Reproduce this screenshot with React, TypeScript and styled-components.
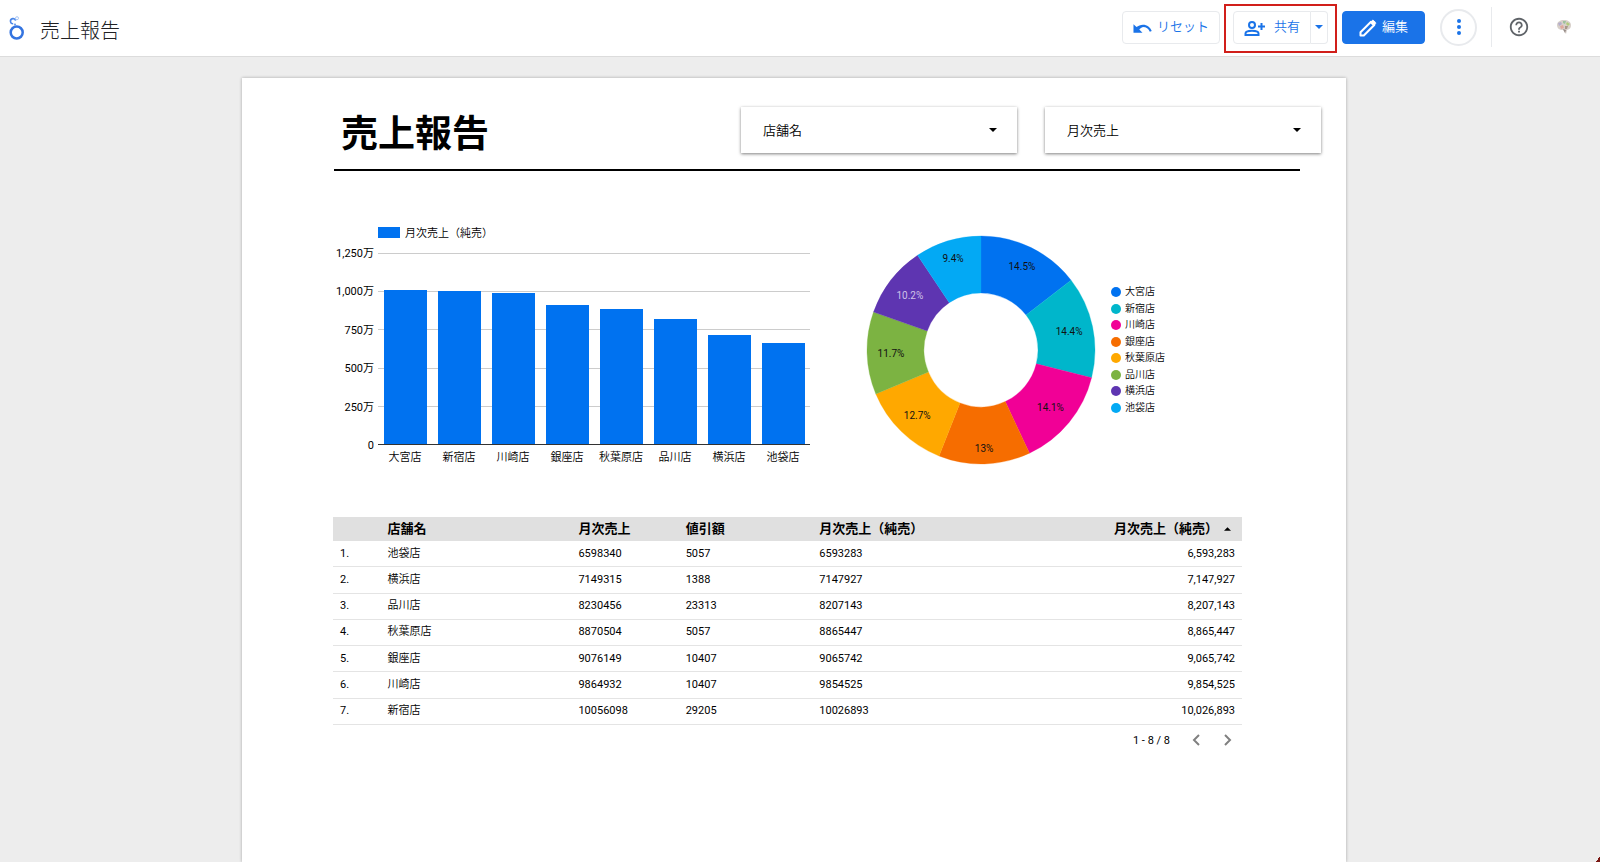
import React from 'react';
import styled, { createGlobalStyle, css } from 'styled-components';

const Global = createGlobalStyle`
  *, *::before, *::after { box-sizing: border-box; }
  html, body { margin: 0; min-height: 100%; background: #ededed; }
  body { font-family: Roboto, "Noto Sans CJK JP", sans-serif; color: #000; overflow: hidden; }
  #root { height: 100vh; }
  button, select { font: inherit; color: inherit; margin: 0; }
`;

const blue = '#1a73e8';

const Shell = styled.div`
  display: flex;
  flex-direction: column;
  height: 100%;
`;

const TopBar = styled.header`
  display: flex;
  align-items: center;
  flex: none;
  height: 57px;
  padding: 0 27px 2px 8px;
  background: #fff;
  border-bottom: 1px solid #dcdcdc;
`;

const ReportName = styled.h1`
  margin: 0 auto 0 15px;
  padding-top: 8px;
  font-size: 20px;
  line-height: 32px;
  font-weight: 300;
  color: #202124;
`;

const outlined = css`
  background: #fff;
  color: ${blue};
  border: 1px solid #e8eaed;
`;

const ToolButton = styled.button<{ $primary?: boolean }>`
  display: flex;
  align-items: center;
  justify-content: center;
  gap: 5px;
  height: 33px;
  padding: 0 10px;
  font-size: 13px;
  line-height: 18px;
  border-radius: 4px;
  ${outlined}
  ${p => p.$primary && css`
    background: ${blue};
    border-color: ${blue};
    color: #fff;
    padding: 0 16px;
  `}
`;

const ButtonText = styled.span`
  font-weight: 350;
`;

const Highlight = styled.div`
  display: flex;
  align-items: center;
  height: 49px;
  margin: 3px 5px 0 4px;
  padding: 0 7px 3px;
  border: 2px solid #d11f1a;
`;

const ShareButton = styled(ToolButton)`
  width: 78px;
  gap: 9px;
  padding: 0 8px;
  border-radius: 4px 0 0 4px;
`;

const ShareMenuButton = styled(ToolButton)`
  width: 17px;
  padding: 0;
  border-left: 0;
  border-radius: 0 4px 4px 0;
`;

const RoundButton = styled.button`
  display: flex;
  align-items: center;
  justify-content: center;
  width: 37px;
  height: 37px;
  margin: 0 14px 0 15px;
  padding: 0;
  border-radius: 50%;
  ${outlined}
  border-width: 2px;
`;

const PlainButton = styled.button`
  display: flex;
  align-items: center;
  justify-content: center;
  padding: 0;
  border: 0;
  background: none;
`;

const UserTools = styled.div`
  display: flex;
  align-items: center;
  gap: 25px;
  height: 40px;
  padding-left: 16px;
  border-left: 1px solid #e8eaed;
`;

const Workspace = styled.main`
  flex: 1;
  min-height: 0;
  padding: 21px 12px 0 0;
  overflow: hidden;
`;

const Sheet = styled.article`
  width: 100%;
  max-width: 1104px;
  min-height: 100%;
  margin: 0 auto;
  padding: 29px 25px 0 91px;
  background: #fff;
  box-shadow: 0 0 3px rgba(0, 0, 0, 0.3);
`;

const SheetHead = styled.div`
  display: flex;
  gap: 28px;
`;

const SheetTitle = styled.h2`
  flex: 1;
  margin: 0 0 0 8px;
  font-size: 37px;
  line-height: 56px;
  font-weight: 700;
`;

const FilterBox = styled.label`
  display: block;
  position: relative;
  width: 276px;
  height: 46px;
  background: #fff;
  box-shadow: 0 1px 3px rgba(0, 0, 0, 0.5);
  svg { position: absolute; right: 20px; top: 21px; pointer-events: none; }
`;

const FilterSelect = styled.select`
  appearance: none;
  width: 100%;
  height: 100%;
  padding: 0 40px 0 22px;
  border: 0;
  background: transparent;
  font-size: 13px;
  font-weight: 350;
`;

const Rule = styled.hr`
  height: 2px;
  margin: 6px 21px 0 1px;
  border: 0;
  background: #000;
`;

const Charts = styled.div`
  display: flex;
  align-items: flex-start;
  padding: 56px 0 0 1px;
`;

const BarPanel = styled.figure`
  width: 476px;
  margin: 0;
`;

const BarLegend = styled.figcaption`
  display: flex;
  align-items: flex-start;
  gap: 5px;
  margin-left: 44px;
  font-size: 11px;
  line-height: 14px;
  font-weight: 350;
`;

const Swatch = styled.i`
  width: 22px;
  height: 11px;
  background: #0072f0;
`;

const PlotRow = styled.div`
  display: flex;
  gap: 4px;
  margin-top: 5px;
`;

const YAxis = styled.div`
  display: flex;
  flex-direction: column;
  justify-content: space-between;
  width: 40px;
  height: 208px;
  font-size: 11px;
  line-height: 16px;
  text-align: right;
  white-space: nowrap;
`;

const Plot = styled.div`
  flex: 1;
  padding-top: 7px;
`;

const PlotArea = styled.div`
  display: grid;
  grid-template-columns: repeat(8, 1fr);
  align-items: end;
  height: 192px;
  border-bottom: 1px solid #333;
  background: repeating-linear-gradient(to bottom, #ccc 0 1px, transparent 1px 20%);
`;

const Bar = styled.div`
  justify-self: center;
  width: 43px;
  background: #0072f0;
`;

const XAxis = styled.div`
  display: grid;
  grid-template-columns: repeat(8, 1fr);
  margin-top: 5px;
  font-size: 11px;
  line-height: 16px;
  font-weight: 350;
  text-align: center;
  white-space: nowrap;
`;

const DonutPanel = styled.figure`
  display: flex;
  align-items: center;
  gap: 15px;
  margin: 8px 0 0 56px;
`;

const DonutLegend = styled.ul`
  display: grid;
  grid-template-rows: repeat(8, 1fr);
  height: 132px;
  margin: 0;
  padding: 0;
  list-style: none;
  font-size: 10px;
  font-weight: 350;
`;

const LegendItem = styled.li<{ $color: string }>`
  display: flex;
  align-items: center;
  gap: 4px;
  line-height: 16px;
  &::before {
    content: "";
    width: 10px;
    height: 10px;
    border-radius: 50%;
    background: ${p => p.$color};
  }
`;

const DataTable = styled.table`
  width: calc(100% - 79px);
  height: 208px;
  margin-top: 51px;
  border-collapse: separate;
  border-spacing: 0;
  table-layout: fixed;
  font-size: 11px;
`;

const HeadCell = styled.th<{ $right?: boolean }>`
  height: 24px;
  padding: 0 ${p => (p.$right ? 11 : 0)}px 0 0;
  background: #e0e0e0;
  font-size: 13px;
  line-height: 20px;
  font-weight: 700;
  text-align: ${p => (p.$right ? 'right' : 'left')};
  white-space: nowrap;
`;

const SortButton = styled(PlainButton)`
  display: inline-flex;
  gap: 6px;
  vertical-align: top;
`;

const Cell = styled.td<{ $right?: boolean; $index?: boolean; $name?: boolean }>`
  height: 26px;
  padding: 0 ${p => (p.$right ? 7 : 0)}px 0 ${p => (p.$index ? 7 : 0)}px;
  border-bottom: 1px solid #e4e4e4;
  line-height: 16px;
  font-weight: ${p => (p.$name ? 350 : 400)};
  text-align: ${p => (p.$right ? 'right' : 'left')};
`;

const Pager = styled.nav`
  display: flex;
  align-items: center;
  justify-content: flex-end;
  height: 30px;
  padding-right: 87px;
  font-size: 11px;
`;

const PagerButton = styled(PlainButton)`
  width: 12px;
  height: 16px;
  margin-left: 20px;
  color: #808080;
`;

const CornerMark = styled.i`
  position: fixed;
  right: 0;
  bottom: 0;
  width: 4px;
  height: 6px;
  background: linear-gradient(to bottom right, transparent 50%, #7a1712 50%);
`;

const stores = [
  { name: '大宮店', sales: 1008, share: 14.5, label: '14.5%', labelRadius: 93, color: '#0072f0' },
  { name: '新宿店', sales: 1002.7, share: 14.4, label: '14.4%', labelRadius: 90, color: '#00b6cb' },
  { name: '川崎店', sales: 985.5, share: 14.1, label: '14.1%', labelRadius: 90, color: '#f10096' },
  { name: '銀座店', sales: 906.6, share: 13, label: '13%', labelRadius: 98, color: '#f66d00' },
  { name: '秋葉原店', sales: 886.5, share: 12.7, label: '12.7%', labelRadius: 91, color: '#ffa800' },
  { name: '品川店', sales: 820.7, share: 11.7, label: '11.7%', labelRadius: 90, color: '#7cb342' },
  { name: '横浜店', sales: 714.8, share: 10.2, label: '10.2%', labelRadius: 90, color: '#5e35b1' },
  { name: '池袋店', sales: 659.3, share: 9.4, label: '9.4%', labelRadius: 96, color: '#03a9f4' },
];

const rows = [
  ['池袋店', '6598340', '5057', '6593283', '6,593,283'],
  ['横浜店', '7149315', '1388', '7147927', '7,147,927'],
  ['品川店', '8230456', '23313', '8207143', '8,207,143'],
  ['秋葉原店', '8870504', '5057', '8865447', '8,865,447'],
  ['銀座店', '9076149', '10407', '9065742', '9,065,742'],
  ['川崎店', '9864932', '10407', '9854525', '9,854,525'],
  ['新宿店', '10056098', '29205', '10026893', '10,026,893'],
];

const Caret = ({ up }: { up?: boolean }) => (
  <svg width={up ? 7 : 8} height="4" viewBox="0 0 8 4" aria-hidden="true">
    <path d={up ? 'M0 4L4 0L8 4z' : 'M0 0H8L4 4z'} fill="currentColor" />
  </svg>
);

const LookerLogo = () => (
  <svg width="17" height="25" viewBox="0 0 17 25" fill="none" aria-hidden="true">
    <circle cx="8.7" cy="17.5" r="6" stroke="#3474e0" strokeWidth="2.5" />
    <path d="M7.600 5.600A2.600 2.600 0 1 0 5.200 8.800" stroke="#4a86e8" strokeWidth="1.6" />
    <path d="M6.600 8.600L7.400 10.400" stroke="#4a86e8" strokeWidth="1.4" />
    <circle cx="9" cy="3.2" r="1.5" stroke="#a9c6f5" strokeWidth="1" />
  </svg>
);

const UndoIcon = () => (
  <svg width="19" height="14" viewBox="0 -3 20 14" aria-hidden="true">
    <path d="M10.5 1.500c-2.600 0-5 1-6.800 2.600L.5 1v9h9.500L6.600 6.600A7 7 0 0 1 10.500 4c3.500 0 6 2 7.200 5l2-.8C18.400 4.300 14.800 1.500 10.500 1.500z" fill="currentColor" />
  </svg>
);

const PersonAddIcon = () => (
  <svg width="21" height="20" viewBox="0 -4 21 20" fill="none" stroke="currentColor" strokeWidth="2" aria-hidden="true">
    <circle cx="8" cy="4" r="3" />
    <path d="M1.500 14V12.500C1.500 10.800 5 9.800 8 9.800s6.500 1 6.500 2.700V14zM14 5.500h7M17.500 2v7" />
  </svg>
);

const PencilIcon = () => (
  <svg width="18" height="20" viewBox="0 -2 18 20" fill="none" stroke="currentColor" aria-hidden="true">
    <path d="M1.500 16.500v-3.300L12 2.700l3.300 3.300L4.800 16.500z" strokeWidth="2" strokeLinejoin="round" />
    <path d="M11.200 3.500L13 1.700c.6-.6 1.200-.6 1.800 0l1.500 1.500c.6.6.6 1.200 0 1.800L14.500 6.800z" fill="currentColor" />
  </svg>
);

const HelpIcon = () => (
  <svg width="22" height="22" viewBox="0 0 24 24" fill="#5f6368" aria-hidden="true">
    <path d="M11 16h2v2h-2zM12 2C6.480 2 2 6.480 2 12s4.480 10 10 10 10-4.480 10-10S17.520 2 12 2zm0 18c-4.410 0-8-3.590-8-8s3.590-8 8-8 8 3.590 8 8-3.590 8-8 8zm0-14c-2.210 0-4 1.790-4 4h2c0-1.100.9-2 2-2s2 .9 2 2c0 2-3 1.750-3 5h2c0-2.250 3-2.500 3-5 0-2.210-1.790-4-4-4z" />
  </svg>
);

const AvatarIcon = () => (
  <svg width="18" height="18" viewBox="0 0 18 18" aria-hidden="true">
    <path d="M2 7C2 4 5 2 9 2s7 2 7 5-1 4-4 5l-1 4-3-4C4 12 2 10 2 7z" fill="#d8d0ca" />
    <path d="M3 5l3-1 1 2-3 2z" fill="#b5aecb" />
    <path d="M8 3l3 0-1 3-2-1z" fill="#9dc29d" />
    <path d="M12 4l3 2-2 2-2-2z" fill="#b2cc7c" />
    <path d="M5 8l3-1 1 3-3 1z" fill="#dfa89c" />
    <path d="M10 8l3 0-1 3-2 0z" fill="#a99789" />
    <path d="M8 11l3 1-1 3z" fill="#958b87" />
  </svg>
);

const polar = (radius: number, turn: number) => {
  const a = turn * 2 * Math.PI;
  return [115 + radius * Math.sin(a), 115 - radius * Math.cos(a)] as const;
};

const Donut = () => {
  const total = stores.reduce((sum, s) => sum + s.share, 0);
  let turn = 0;
  return (
    <svg width="230" height="230" viewBox="0 0 230 230" role="img" aria-label="店舗別の売上構成">
      {stores.map(s => {
        const start = turn;
        turn += s.share / total;
        const [ax, ay] = polar(114, start);
        const [bx, by] = polar(114, turn);
        const [cx, cy] = polar(57, turn);
        const [dx, dy] = polar(57, start);
        const [tx, ty] = polar(s.labelRadius, (start + turn) / 2);
        return (
          <g key={s.name}>
            <path d={`M${ax} ${ay}A114 114 0 0 1 ${bx} ${by}L${cx} ${cy}A57 57 0 0 0 ${dx} ${dy}z`} fill={s.color} stroke={s.color} strokeWidth="0.3" />
            <text x={tx} y={ty + 4} textAnchor="middle" fontSize="10" fill={s.name === '横浜店' ? '#cfc2e8' : '#111'}>{s.label}</text>
          </g>
        );
      })}
    </svg>
  );
};

export default function App() {
  return (
    <Shell>
      <Global />
      <TopBar>
        <LookerLogo />
        <ReportName>売上報告</ReportName>
        <ToolButton type="button"><UndoIcon /><ButtonText>リセット</ButtonText></ToolButton>
        <Highlight>
          <ShareButton type="button"><PersonAddIcon /><ButtonText>共有</ButtonText></ShareButton>
          <ShareMenuButton type="button" aria-label="共有メニュー"><Caret /></ShareMenuButton>
        </Highlight>
        <ToolButton type="button" $primary><PencilIcon /><ButtonText>編集</ButtonText></ToolButton>
        <RoundButton type="button" aria-label="その他">
          <svg width="4" height="16" viewBox="0 0 4 16" fill="currentColor" aria-hidden="true">
            <circle cx="2" cy="2" r="2" /><circle cx="2" cy="8" r="2" /><circle cx="2" cy="14" r="2" />
          </svg>
        </RoundButton>
        <UserTools>
          <PlainButton type="button" aria-label="ヘルプ"><HelpIcon /></PlainButton>
          <PlainButton type="button" aria-label="アカウント"><AvatarIcon /></PlainButton>
        </UserTools>
      </TopBar>
      <Workspace>
        <Sheet>
          <SheetHead>
            <SheetTitle>売上報告</SheetTitle>
            {['店舗名', '月次売上'].map(name => (
              <FilterBox key={name}>
                <FilterSelect aria-label={name}><option>{name}</option></FilterSelect>
                <Caret />
              </FilterBox>
            ))}
          </SheetHead>
          <Rule />
          <Charts>
            <BarPanel>
              <BarLegend><Swatch />月次売上（純売）</BarLegend>
              <PlotRow>
                <YAxis>
                  {['1,250万', '1,000万', '750万', '500万', '250万', '0'].map(t => <span key={t}>{t}</span>)}
                </YAxis>
                <Plot>
                  <PlotArea>
                    {stores.map(s => <Bar key={s.name} style={{ height: `${Math.round(s.sales / 1250 * 191)}px` }} />)}
                  </PlotArea>
                  <XAxis>{stores.map(s => <span key={s.name}>{s.name}</span>)}</XAxis>
                </Plot>
              </PlotRow>
            </BarPanel>
            <DonutPanel>
              <Donut />
              <DonutLegend>
                {stores.map(s => <LegendItem key={s.name} $color={s.color}>{s.name}</LegendItem>)}
              </DonutLegend>
            </DonutPanel>
          </Charts>
          <DataTable>
            <colgroup>
              <col style={{ width: '6%' }} />
              <col style={{ width: '21%' }} />
              <col style={{ width: '11.8%' }} />
              <col style={{ width: '14.7%' }} />
              <col style={{ width: '25%' }} />
              <col />
            </colgroup>
            <thead>
              <tr>
                <HeadCell />
                <HeadCell>店舗名</HeadCell>
                <HeadCell>月次売上</HeadCell>
                <HeadCell>値引額</HeadCell>
                <HeadCell>月次売上（純売）</HeadCell>
                <HeadCell $right><SortButton type="button">月次売上（純売）<Caret up /></SortButton></HeadCell>
              </tr>
            </thead>
            <tbody>
              {rows.map((r, i) => (
                <tr key={r[0]}>
                  <Cell $index>{i + 1}.</Cell>
                  {r.map((v, j) => <Cell key={j} $name={j === 0} $right={j === 4}>{v}</Cell>)}
                </tr>
              ))}
            </tbody>
          </DataTable>
          <Pager aria-label="ページ送り">
            1 - 8 / 8
            <PagerButton type="button" aria-label="前へ">
              <svg width="8" height="12" viewBox="0 0 8 12" fill="none" stroke="currentColor" strokeWidth="2"><path d="M7 1L2 6L7 11" /></svg>
            </PagerButton>
            <PagerButton type="button" aria-label="次へ">
              <svg width="8" height="12" viewBox="0 0 8 12" fill="none" stroke="currentColor" strokeWidth="2"><path d="M1 1L6 6L1 11" /></svg>
            </PagerButton>
          </Pager>
        </Sheet>
      </Workspace>
      <CornerMark />
    </Shell>
  );
}
